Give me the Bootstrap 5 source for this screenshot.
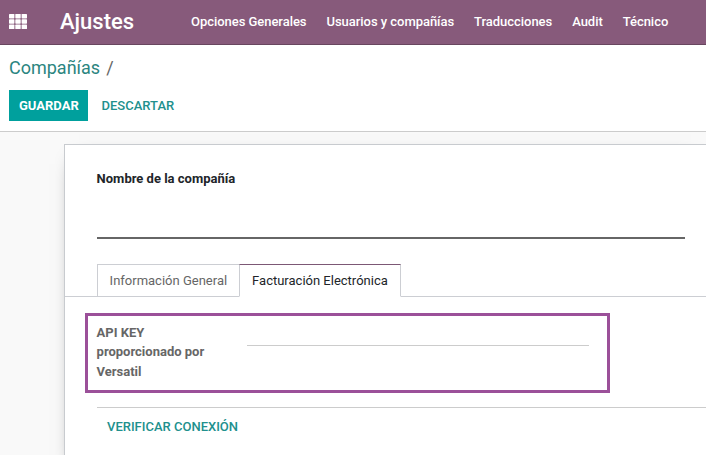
<!DOCTYPE html>
<html lang="es">
<head>
<meta charset="utf-8">
<meta name="viewport" content="width=device-width, initial-scale=1">
<title>Ajustes</title>
<link href="https://cdn.jsdelivr.net/npm/bootstrap@5.3.0/dist/css/bootstrap.min.css" rel="stylesheet">
<style>
body { font: 400 13px/19.5px Roboto, sans-serif; color: #666; background: #f9f9f9; height: 455px; overflow: hidden; }
.topbar { height: 45px; background: #875a7b; border-bottom: 1px solid #68465f; padding: 0 0 0 9px; }
.apps-icon { margin-top: -2px; }
.topbar .navbar-brand { font-size: 22px; line-height: 30px; font-weight: 500; margin: 0 0 0 33px; padding: 0; width: 121px; }
.topbar .navbar-nav .nav-link { font-size: 13px; color: #fff; padding: 0 10px; white-space: nowrap; letter-spacing: -.04px; }
.topbar .navbar-nav { font-weight: 500; }
.control-panel { height: 87px; border-bottom: 1px solid #ccc; padding: 9px 9px 0; }
.breadcrumb { font-size: 18px; line-height: 27px; margin-bottom: 9px; }
.breadcrumb a { color: #2b8580; }
.breadcrumb span { margin-left: 6px; }
.btn { --bs-btn-border-radius: 0; font-size: 13px; font-weight: 500; line-height: 19px; padding: 5px 9px; text-transform: uppercase; }
.btn-save { width: 79px; font-weight: 700; background: #00a09d; border-color: #00a09d; color: #fff; white-space: nowrap; }
.btn-text { color: #21908d; }
.btn-save + .btn-text { margin-left: -.5px; }
.sheet { margin: 12px 0 0 64px; height: 330px; border: 1px solid #c8cbcf; border-right: 0; box-shadow: 0 5px 20px -15px #000; padding-top: 24px; }
.name-block { padding: 0 21px 0 32px; }
.name-block label { font-weight: 700; color: #212529; display: block; margin-left: -.4px; }
.form-control, .form-control:focus { border: 0; border-radius: 0; padding: 0; background: none; box-shadow: none; }
.name-block .form-control { height: 50px; border-bottom: 2px solid #666; }
.nav-tabs { --bs-nav-tabs-border-color: #ccced3; margin-top: 25px; padding-left: 32px; }
.nav-tabs .nav-link { border: 1px solid #ccced3; border-radius: 0; color: #666; height: 33px; padding: 6px 11.6px; line-height: 20px; white-space: nowrap; }
.nav-tabs .nav-link.active { color: #212529; border-color: #7c5875 #ccced3 #fff; padding: 6px 12.4px; }
.nav-tabs .nav-item + .nav-item { margin-left: -1px; }
.key-box { width: 525px; height: 80px; margin: 16px 0 0 20px; border: 3px solid #9b5099; padding: 7px 18px 0 8.6px; }
.key-box label { width: 150.4px; padding-right: 30px; font-weight: 700; }
.key-box .form-control { height: 23px; border-bottom: 1px solid #ccc; }
.action-row { margin: 14px 0 0 32px; border-top: 1px solid #ccc; padding-top: 3px; }
</style>
</head>
<body>
<nav class="topbar navbar navbar-expand navbar-dark justify-content-start">
  <svg class="apps-icon" width="18" height="15" viewBox="0 0 18 15" fill="#fff" aria-hidden="true">
    <g id="r"><rect width="5.4" height="4.4" rx=".6"/><rect x="6.3" width="5.4" height="4.4" rx=".6"/><rect x="12.6" width="5.4" height="4.4" rx=".6"/></g>
    <use href="#r" y="5.3"/><use href="#r" y="10.6"/>
  </svg>
  <a class="navbar-brand" href="#">Ajustes</a>
  <ul class="navbar-nav">
    <li class="nav-item"><a class="nav-link" href="#">Opciones Generales</a></li>
    <li class="nav-item"><a class="nav-link" href="#">Usuarios y compañías</a></li>
    <li class="nav-item"><a class="nav-link" href="#">Traducciones</a></li>
    <li class="nav-item"><a class="nav-link" href="#">Audit</a></li>
    <li class="nav-item"><a class="nav-link" href="#">Técnico</a></li>
  </ul>
</nav>
<header class="control-panel bg-white">
  <div class="breadcrumb"><a class="text-decoration-none" href="#">Compañías</a><span>/</span></div>
  <div class="d-flex gap-1">
    <button class="btn btn-save" type="button">Guardar</button>
    <button class="btn btn-text" type="button">Descartar</button>
  </div>
</header>
<main class="sheet bg-white">
  <div class="name-block">
    <label for="company">Nombre de la compañía</label>
    <input class="form-control" id="company" type="text">
  </div>
  <ul class="nav nav-tabs flex-nowrap">
    <li class="nav-item"><a class="nav-link" href="#">Información General</a></li>
    <li class="nav-item"><a class="nav-link active" href="#">Facturación Electrónica</a></li>
  </ul>
  <div class="key-box d-flex align-items-start">
    <label class="flex-shrink-0" for="apikey">API KEY proporcionado por Versatil</label>
    <input class="form-control" id="apikey" type="text">
  </div>
  <div class="action-row"><button class="btn btn-text" type="button">Verificar conexión</button></div>
</main>
<script src="https://cdn.jsdelivr.net/npm/bootstrap@5.3.0/dist/js/bootstrap.bundle.min.js"></script>
</body>
</html>
